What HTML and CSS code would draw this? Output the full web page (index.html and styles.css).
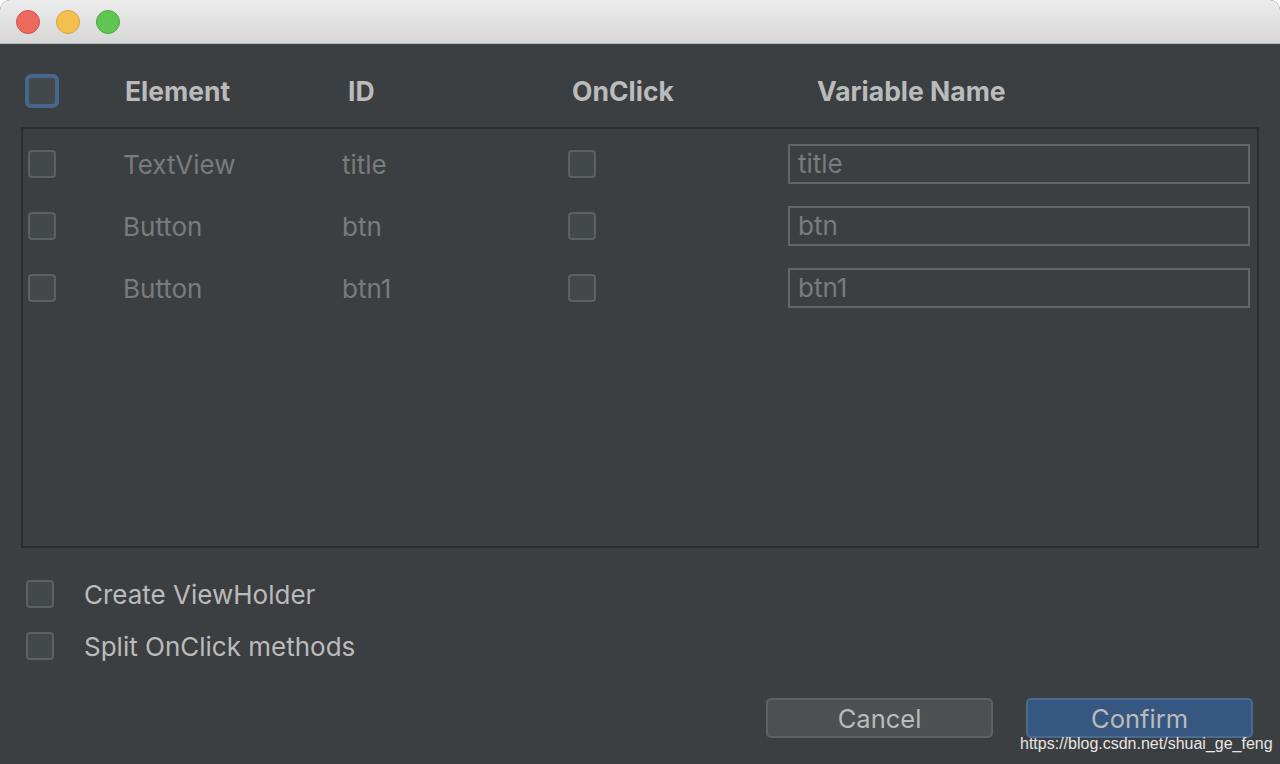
FILE: index.html
```html
<!DOCTYPE html>
<html>
<head>
<meta charset="utf-8">
<link rel="stylesheet" href="styles.css">
</head>
<body>
<div class="window">
  <div class="titlebar">
    <span class="light red"></span>
    <span class="light yellow"></span>
    <span class="light green"></span>
  </div>
  <div class="content">
    <div class="head">
      <span class="cb cb-focus"></span>
      <span class="h">Element</span>
      <span class="h">ID</span>
      <span class="h">OnClick</span>
      <span class="h">Variable Name</span>
    </div>
    <div class="table">
      <div class="row">
        <span class="cb"></span>
        <span class="cell">TextView</span>
        <span class="cell">title</span>
        <span class="cb"></span>
        <span class="field">title</span>
      </div>
      <div class="row">
        <span class="cb"></span>
        <span class="cell">Button</span>
        <span class="cell">btn</span>
        <span class="cb"></span>
        <span class="field">btn</span>
      </div>
      <div class="row">
        <span class="cb"></span>
        <span class="cell">Button</span>
        <span class="cell">btn1</span>
        <span class="cb"></span>
        <span class="field">btn1</span>
      </div>
    </div>
    <div class="options">
      <label class="opt"><span class="cb"></span><span>Create ViewHolder</span></label>
      <label class="opt"><span class="cb"></span><span>Split OnClick methods</span></label>
    </div>
    <div class="buttons">
      <button class="btn">Cancel</button>
      <button class="btn primary">Confirm</button>
    </div>
  </div>
  <div class="watermark">https://blog.csdn.net/shuai_ge_feng</div>
</div>
</body>
</html>
```
FILE: styles.css
```css
html, body {
  margin: 0;
  padding: 0;
  background: #ffffff;
}
body {
  font-family: Inter, "Liberation Sans", Arial, sans-serif;
}
.window {
  position: relative;
  width: 1280px;
  height: 764px;
  background: #3c3f41;
  border-radius: 10px 10px 0 0;
  overflow: hidden;
}
.titlebar {
  border-bottom: 1px solid #b9b9b9;
  background: linear-gradient(#ececec, #d7d7d7);
  display: flex;
  align-items: center;
  gap: 16px;
  padding-left: 16px;
  box-sizing: border-box;
  height: 44px;
}
.light {
  width: 24px;
  height: 24px;
  border-radius: 50%;
  box-sizing: border-box;
}
.red { background: #ed6a5e; border: 1px solid #d25147; }
.yellow { background: #f5bf4f; border: 1px solid #d6a13c; }
.green { background: #61c554; border: 1px solid #4ca73f; }

.content {
  padding: 0 21px 0 21px;
}
.cb {
  display: block;
  width: 28px;
  height: 28px;
  box-sizing: border-box;
  border: 2px solid #5d6061;
  background: #43494a;
  border-radius: 4px;
}
.cb-focus {
  width: 34px;
  height: 34px;
  border: 4px solid #46668e;
  border-radius: 6px;
  background: #43494a;
}
.head {
  height: 83px;
  display: grid;
  grid-template-columns: 100px 223px 224px 245px 1fr;
  align-items: center;
  padding-left: 4px;
  box-sizing: border-box;
  padding-top: 10px;
}
.h {
  font-weight: bold;
  font-size: 26.5px;
  color: #bbbbbb;
}
.table {
  height: 421px;
  border: 2px solid #2c2d2e;
  box-sizing: border-box;
  padding: 4px 7px 0 5px;
}
.row {
  height: 62px;
  display: grid;
  grid-template-columns: 95px 219px 226px 220px 462px;
  align-items: center;
}
.cell {
  font-size: 26px;
  color: #7a7b7c;
}
.field {
  height: 40px;
  border: 2px solid #646566;
  box-sizing: border-box;
  font-size: 26px;
  color: #7a7b7c;
  padding-left: 8px;
  line-height: 36px;
}
.options {
  padding: 32px 0 0 5px;
  display: flex;
  flex-direction: column;
  gap: 24px;
}
.opt {
  display: flex;
  align-items: center;
  gap: 30px;
  font-size: 26px;
  color: #bbbbbb;
  height: 28px;
}
.buttons {
  display: flex;
  justify-content: flex-end;
  gap: 33px;
  padding: 38px 6px 0 0;
}
.btn {
  width: 227px;
  height: 40px;
  border-radius: 5px;
  border: 2px solid #5e6163;
  background: #4c5052;
  color: #bbbbbb;
  font-family: Inter, "Liberation Sans", Arial, sans-serif;
  font-size: 25.5px;
  padding: 0;
}
.btn.primary {
  background: #365880;
  border-color: #4a6b90;
}
.watermark {
  position: absolute;
  left: 1020px;
  top: 735px;
  font-size: 16px;
  color: #e6e6e6;
  font-family: "Liberation Sans", Arial, sans-serif;
}
```
